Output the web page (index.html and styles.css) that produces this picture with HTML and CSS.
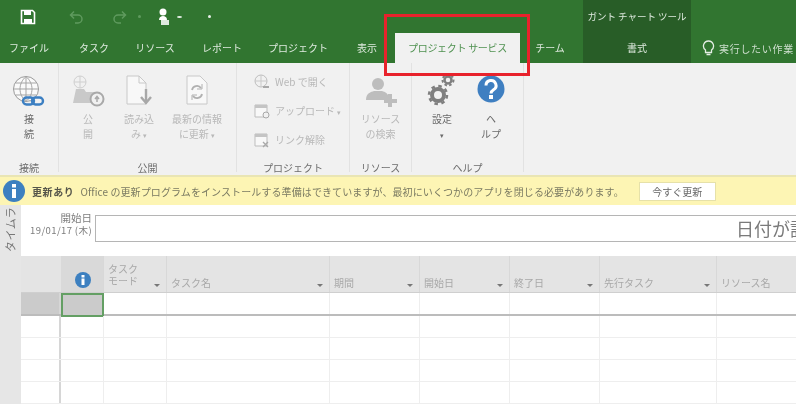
FILE: index.html
```html
<!DOCTYPE html>
<html lang="ja">
<head>
    <meta charset="UTF-8">
    <title>Project</title>
    <link rel="stylesheet" href="styles.css">
</head>
<body>
<div class="app">
    <!-- Title bar and tabs -->
    <div class="topbar">
        <div class="top-left">
            <div class="qat">
                <svg class="qa-save" width="16" height="16" viewBox="0 0 16 16"><path d="M1.500 1.500h11l2 2v11h-13z" fill="none" stroke="#fff" stroke-width="1.600"/><path d="M4 2h7v4H4zM4 10h8v4H4z" fill="#fff"/></svg>
                <svg class="qa-undo" width="16" height="14" viewBox="0 0 16 14"><path d="M3 5h7a4 4 0 0 1 0 8H7M6 1.500 2.500 5 6 8.500" fill="none" stroke="#5f9a5e" stroke-width="1.500"/></svg>
                <svg class="qa-redo" width="16" height="14" viewBox="0 0 16 14"><path d="M13 5H6a4 4 0 0 0 0 8h3M10 1.500 13.500 5 10 8.500" fill="none" stroke="#5f9a5e" stroke-width="1.500"/></svg>
                <span class="qa-dot dim"></span>
                <svg class="qa-user" width="12" height="18" viewBox="0 0 12 18"><circle cx="5" cy="4" r="3.500" fill="#fff"/><path d="M1 12c0-3 2-4 4-4s4 1 4 4z" fill="#fff"/><path d="M3 12h8v5H3z" fill="#dfe9df"/></svg>
                <span class="qa-dot drop"></span>
                <span class="qa-dot last"></span>
            </div>
            <div class="tabs">
                <span class="tab t-file">ファイル</span>
                <span class="tab t-task">タスク</span>
                <span class="tab t-res">リソース</span>
                <span class="tab t-rep">レポート</span>
                <span class="tab t-proj">プロジェクト</span>
                <span class="tab t-view">表示</span>
                <span class="tab tab-active">プロジェクト サービス</span>
                <span class="tab t-team">チーム</span>
            </div>
        </div>
        <div class="tool-tab">
            <div class="tool-title">ガント チャート ツール</div>
            <div class="tool-name">書式</div>
        </div>
        <div class="tell-me">
            <svg width="13" height="17" viewBox="0 0 13 17"><path d="M6.500 1a5 5 0 0 0-3 9v2.500h6V10a5 5 0 0 0-3-9zM4.500 14.500h4" fill="none" stroke="#e4eee4" stroke-width="1.300"/></svg>
            <span>実行したい作業</span>
        </div>
    </div>

    <!-- Ribbon -->
    <div class="ribbon">
        <div class="group g-connect">
            <div class="group-body">
                <div class="big-btn">
                    <svg width="36" height="36" viewBox="0 0 36 36"><circle cx="15" cy="14" r="12.500" fill="#fafafa" stroke="#9a9a9a"/><path d="M2.500 14h25M4.500 8h21M4.500 20h21M15 1.500v25M15 1.500c-8 7-8 18 0 25M15 1.500c8 7 8 18 0 25" fill="none" stroke="#a5a5a5"/><rect x="12" y="22.500" width="11" height="7" rx="3.500" fill="none" stroke="#3c7fc2" stroke-width="2.400"/><rect x="21" y="22.500" width="11" height="7" rx="3.500" fill="none" stroke="#3c7fc2" stroke-width="2.400"/></svg>
                    <span class="label active-label">接<br>続</span>
                </div>
            </div>
            <div class="group-name">接続</div>
        </div>
        <div class="group g-publish">
            <div class="group-body">
                <div class="big-btn b-pub">
                    <svg width="34" height="36" viewBox="0 0 34 36"><circle cx="9" cy="7" r="6" fill="none" stroke="#cfcfcf"/><path d="M3 7h12M9 1v12" stroke="#cfcfcf"/><path d="M2 28l3-14h8l2 3h12v11z" fill="#c9c9c9"/><circle cx="26" cy="24" r="6.500" fill="#f1f1f1" stroke="#a9a9a9" stroke-width="2"/><path d="M26 27v-5M24 24l2-2.500 2 2.500" fill="none" stroke="#a9a9a9" stroke-width="1.500"/></svg>
                    <span class="label">公<br>開</span>
                </div>
                <div class="big-btn b-read">
                    <svg width="28" height="36" viewBox="0 0 28 36"><path d="M2 1h12l7 7v21H2z" fill="#f8f8f8" stroke="#c8c8c8"/><path d="M14 1v7h7" fill="none" stroke="#c8c8c8"/><path d="M21 14v12M16 22l5 6 5-6" fill="none" stroke="#a8a8a8" stroke-width="2.400"/></svg>
                    <span class="label">読み込<br>み <small>▾</small></span>
                </div>
                <div class="big-btn b-refresh">
                    <svg width="24" height="36" viewBox="0 0 24 36"><path d="M2 1h13l7 7v21H2z" fill="#f8f8f8" stroke="#c8c8c8"/><path d="M7 15a5 5 0 0 1 9-2M17 19a5 5 0 0 1-9 2" fill="none" stroke="#b0b0b0" stroke-width="1.800"/><path d="M17 9v5h-5M7 25v-5h5" fill="none" stroke="#b0b0b0"/></svg>
                    <span class="label">最新の情報<br>に更新 <small>▾</small></span>
                </div>
            </div>
            <div class="group-name">公開</div>
        </div>
        <div class="group g-project">
            <div class="group-body small-list">
                <div class="small-btn">
                    <svg width="16" height="16" viewBox="0 0 16 16"><circle cx="7" cy="7" r="6" fill="none" stroke="#bdbdbd"/><path d="M1 7h12M7 1v12" stroke="#c9c9c9"/><path d="M9 13h6" stroke="#a8a8a8" stroke-width="2"/></svg>
                    <span>Web で開く</span>
                </div>
                <div class="small-btn">
                    <svg width="16" height="16" viewBox="0 0 16 16"><path d="M1 2h12v12H1z" fill="#f8f8f8" stroke="#bdbdbd"/><path d="M1 2h12v3H1z" fill="#c4c4c4"/><circle cx="12" cy="12" r="3" fill="#f1f1f1" stroke="#a8a8a8"/></svg>
                    <span>アップロード <small>▾</small></span>
                </div>
                <div class="small-btn">
                    <svg width="16" height="16" viewBox="0 0 16 16"><path d="M1 2h12v12H1z" fill="#f8f8f8" stroke="#bdbdbd"/><path d="M1 2h12v3H1z" fill="#c4c4c4"/><path d="M9 10l5 5M14 10l-5 5" stroke="#a8a8a8" stroke-width="1.300"/></svg>
                    <span>リンク解除</span>
                </div>
            </div>
            <div class="group-name">プロジェクト</div>
        </div>
        <div class="group g-resource">
            <div class="group-body">
                <div class="big-btn">
                    <svg width="36" height="36" viewBox="0 0 36 36"><circle cx="15" cy="9" r="6" fill="#bdbdbd"/><path d="M3 25c0-7 5-8 8-9h8c3 1 7 2 7 9z" fill="#bdbdbd"/><path d="M27 19v13M21 26h13" stroke="#bdbdbd" stroke-width="4"/></svg>
                    <span class="label">リソース<br>の検索</span>
                </div>
            </div>
            <div class="group-name">リソース</div>
        </div>
        <div class="group g-help">
            <div class="group-body">
                <div class="big-btn b-set">
                    <svg width="32" height="36" viewBox="0 0 32 36"><g fill="none" stroke="#7f7f7f"><circle cx="12" cy="20" r="6" stroke-width="4"/><circle cx="12" cy="20" r="9" stroke-width="2.500" stroke-dasharray="3.500 3.570"/><circle cx="22" cy="5" r="3.500" stroke-width="2.500"/><circle cx="22" cy="5" r="5.500" stroke-width="2" stroke-dasharray="2.500 2.260"/></g></svg>
                    <span class="label active-label">設定<br><small>▾</small></span>
                </div>
                <div class="big-btn b-help">
                    <svg width="30" height="36" viewBox="0 0 30 36"><circle cx="15" cy="14" r="13.500" fill="#3f7fc1"/><path d="M10 10.500a5 5 0 1 1 7.500 4.300c-1.600 1-2.500 1.700-2.500 3.700" fill="none" stroke="#fff" stroke-width="3"/><rect x="13" y="20" width="4" height="4" fill="#fff"/></svg>
                    <span class="label active-label">ヘ<br>ルプ</span>
                </div>
            </div>
            <div class="group-name">ヘルプ</div>
        </div>
    </div>

    <!-- Update message -->
    <div class="notice">
        <svg class="notice-icon" width="22" height="22" viewBox="0 0 22 22"><circle cx="11" cy="11" r="11" fill="#3d80c0"/><rect x="9" y="9" width="4" height="9" fill="#fff"/><rect x="9" y="4" width="4" height="3.500" fill="#fff"/></svg>
        <b>更新あり</b>
        <span class="notice-text">Office の更新プログラムをインストールする準備はできていますが、最初にいくつかのアプリを閉じる必要があります。</span>
        <span class="notice-btn">今すぐ更新</span>
    </div>

    <!-- Timeline -->
    <div class="timeline">
        <div class="side-tab"><span>タイムラ</span></div>
        <div class="start">
            <div>開始日</div>
            <div class="start-date">19/01/17 (木)</div>
        </div>
        <div class="time-box"><span>日付が設</span></div>
    </div>

    <!-- Task sheet -->
    <div class="sheet">
        <div class="sheet-side"></div>
        <div class="rows">
            <div class="row head">
                <div class="cell rowno"></div>
                <div class="cell c-info"><svg width="16" height="16" viewBox="0 0 16 16"><circle cx="8" cy="8" r="8" fill="#3d80c0"/><rect x="6.500" y="6.500" width="3" height="6.500" fill="#fff"/><rect x="6.500" y="3" width="3" height="2.500" fill="#fff"/></svg></div>
                <div class="cell c-mode"><span class="two">タスク<br>モード</span><i class="arrow"></i></div>
                <div class="cell c-name">タスク名<i class="arrow"></i></div>
                <div class="cell c-dur">期間<i class="arrow"></i></div>
                <div class="cell c-date">開始日<i class="arrow"></i></div>
                <div class="cell c-date">終了日<i class="arrow"></i></div>
                <div class="cell c-pre">先行タスク<i class="arrow"></i></div>
                <div class="cell c-last">リソース名</div>
            </div>
            <div class="row first">
                <div class="cell rowno sel"></div>
                <div class="cell c-info cur"></div>
                <div class="cell c-mode"></div><div class="cell c-name"></div><div class="cell c-dur"></div><div class="cell c-date"></div><div class="cell c-date"></div><div class="cell c-pre"></div><div class="cell c-last"></div>
            </div>
            <div class="row">
                <div class="cell rowno"></div><div class="cell c-info"></div>
                <div class="cell c-mode"></div><div class="cell c-name"></div><div class="cell c-dur"></div><div class="cell c-date"></div><div class="cell c-date"></div><div class="cell c-pre"></div><div class="cell c-last"></div>
            </div>
            <div class="row">
                <div class="cell rowno"></div><div class="cell c-info"></div>
                <div class="cell c-mode"></div><div class="cell c-name"></div><div class="cell c-dur"></div><div class="cell c-date"></div><div class="cell c-date"></div><div class="cell c-pre"></div><div class="cell c-last"></div>
            </div>
            <div class="row">
                <div class="cell rowno"></div><div class="cell c-info"></div>
                <div class="cell c-mode"></div><div class="cell c-name"></div><div class="cell c-dur"></div><div class="cell c-date"></div><div class="cell c-date"></div><div class="cell c-pre"></div><div class="cell c-last"></div>
            </div>
            <div class="row">
                <div class="cell rowno"></div><div class="cell c-info"></div>
                <div class="cell c-mode"></div><div class="cell c-name"></div><div class="cell c-dur"></div><div class="cell c-date"></div><div class="cell c-date"></div><div class="cell c-pre"></div><div class="cell c-last"></div>
            </div>
        </div>
    </div>

    <div class="callout"></div>
</div>
</body>
</html>
```

FILE: styles.css
```css
html, body {
    margin: 0;
    padding: 0;
    overflow: hidden;
    background: #fff;
}
.app {
    position: relative;
    width: 796px;
    height: 404px;
    overflow: hidden;
    font-family: "Noto Sans CJK JP", "Noto Sans", sans-serif;
    font-size: 10px;
    color: #6a6a6a;
    filter: blur(0.7px);
}
svg {
    display: block;
    flex: none;
}
small {
    font-size: 7px;
}

/* title bar */
.topbar {
    display: flex;
    height: 63px;
    background: #317530;
    color: #dfeadf;
}
.top-left {
    width: 583px;
    flex: none;
}
.qat {
    display: flex;
    align-items: center;
    height: 33px;
    padding-left: 20px;
}
.qa-undo { margin-left: 32px; }
.qa-redo { margin-left: 28px; }
.qa-dot {
    width: 3px;
    height: 3px;
    background: #e8f0e8;
    border-radius: 50%;
}
.qa-dot.dim { margin-left: 10px; background: #5f9a5e; }
.qa-user { margin-left: 17px; }
.qa-dot.drop { margin-left: 7px; width: 5px; height: 2px; }
.qa-dot.last { margin-left: 26px; }
.tabs {
    display: flex;
    height: 30px;
    align-items: flex-end;
}
.tab {
    height: 27px;
    line-height: 24px;
    text-align: center;
    flex: none;
}
.t-file { width: 58px; }
.t-task { width: 72px; }
.t-res { width: 50px; }
.t-rep { width: 84px; }
.t-proj { width: 68px; }
.t-view { width: 70px; }
.tab-active {
    width: 125px;
    height: 30px;
    line-height: 30px;
    margin-left: -7px;
    background: #f1f1f1;
    color: #4f9150;
    letter-spacing: -0.3px;
}
.t-team { width: 60px; }
.tool-tab {
    width: 108px;
    flex: none;
    background: #285d27;
    text-align: center;
}
.tool-title {
    height: 33px;
    line-height: 32px;
    font-size: 9.500px;
}
.tool-name {
    height: 30px;
    line-height: 30px;
}
.tell-me {
    display: flex;
    align-items: center;
    gap: 4px;
    padding: 33px 0 0 11px;
    height: 30px;
    white-space: nowrap;
    letter-spacing: 0.7px;
    color: #cfdfcf;
}

/* ribbon */
.ribbon {
    display: flex;
    height: 112px;
    background: #f1f1f1;
    color: #b8b8b8;
}
.group {
    display: flex;
    flex-direction: column;
    flex: none;
    height: 109px;
    border-right: 1px solid #e2e2e2;
    box-sizing: border-box;
}
.g-connect { width: 59px; }
.g-publish { width: 178px; }
.g-project { width: 113px; }
.g-resource { width: 62px; }
.g-help { width: 112px; }
.group-body {
    display: flex;
    flex: 1;
    min-height: 0;
}
.group-name {
    height: 16px;
    line-height: 23px;
    text-align: center;
    color: #6d6d6d;
}
.big-btn {
    display: flex;
    flex-direction: column;
    align-items: center;
    flex: none;
    width: 100%;
    padding-top: 12px;
    box-sizing: border-box;
}
.label {
    line-height: 15px;
    text-align: center;
    white-space: nowrap;
}
.active-label { color: #6a6a6a; }
.b-pub { width: 58px; }
.b-read { width: 42px; padding-left: 2px; }
.b-refresh { width: 76px; }
.small-list {
    flex-direction: column;
    padding: 8px 0 0 17px;
    gap: 8px;
}
.small-btn {
    display: flex;
    align-items: center;
    gap: 5px;
    height: 21px;
    white-space: nowrap;
}
.b-set { width: 60px; }
.b-help { width: 38px; }

/* notice */
.notice {
    display: flex;
    align-items: center;
    height: 30px;
    box-sizing: border-box;
    border-top: 2px solid #e9e5b4;
    padding-left: 3px;
    background: #fdf5b4;
    white-space: nowrap;
    color: #7a7a62;
}
.notice b {
    margin-left: 7px;
    color: #55554a;
    letter-spacing: 0.6px;
}
.notice-text {
    margin-left: 6px;
    letter-spacing: 0.1px;
}
.notice-btn {
    margin-left: 15px;
    width: 77px;
    height: 19px;
    line-height: 17px;
    box-sizing: border-box;
    text-align: center;
    background: #fff;
    border: 1px solid #e6e1a9;
    color: #666;
}

/* timeline */
.timeline {
    display: flex;
    height: 51px;
    background: #fff;
}
.side-tab {
    width: 21px;
    flex: none;
    background: #e6e6e6;
    overflow: hidden;
}
.side-tab span {
    display: block;
    height: 47px;
    writing-mode: vertical-rl;
    text-orientation: sideways;
    transform: rotate(180deg);
    line-height: 21px;
    font-size: 11px;
    letter-spacing: 0.5px;
    white-space: nowrap;
    color: #777;
}
.start {
    width: 71px;
    flex: none;
    text-align: right;
    line-height: 12px;
    padding-top: 7px;
    font-size: 10.500px;
    color: #7d7d7d;
}
.start-date {
    font-size: 9.500px;
    letter-spacing: 0.4px;
    white-space: nowrap;
}
.time-box {
    flex: 1;
    height: 27px;
    margin: 10px 0 0 3px;
    box-sizing: border-box;
    border: 1px solid #b5b5b5;
    border-right: 0;
    padding-left: 640px;
    overflow: hidden;
    font-size: 18px;
    line-height: 25px;
    white-space: nowrap;
    color: #7a7a7a;
}

/* sheet */
.sheet {
    display: flex;
    height: 148px;
    background: #fff;
}
.sheet-side {
    width: 21px;
    flex: none;
    background: #e6e6e6;
}
.rows {
    flex: 1;
    min-width: 0;
}
.row {
    display: flex;
    height: 22px;
    box-sizing: border-box;
    border-bottom: 1px solid #eeeeee;
}
.row.head {
    height: 37px;
    background: #e4e4e4;
    border-bottom: 1px solid #cfcfcf;
    color: #a8a8a8;
}
.row.first {
    height: 23px;
    border-bottom: 2px solid #bcbcbc;
}
.cell {
    position: relative;
    flex: none;
    box-sizing: border-box;
    border-right: 1px solid #eeeeee;
    white-space: nowrap;
}
.head .cell {
    padding: 19px 0 0 4px;
    line-height: 15px;
    border-right-color: #d8d8d8;
}
.rowno {
    width: 40px;
    border-right: 2px solid #d6d6d6;
}
.row.head .rowno { border-right-color: #e4e4e4; }
.rowno.sel { background: #cbcbcb; }
.c-info { width: 43px; }
.head .c-info {
    background: #d9d9d9;
    padding: 16px 0 0 14px;
}
.cur {
    background: #cbcbcb;
    border: 2px solid #649f64;
    margin-bottom: -2px;
    height: 24px;
}
.c-mode { width: 63px; }
.head .c-mode { padding-top: 7px; }
.two { display: block; line-height: 12px; }
.c-name { width: 163px; }
.c-dur { width: 90px; }
.c-date { width: 90px; }
.c-pre { width: 117px; }
.c-last { width: 79px; border-right: 0; }
.arrow {
    position: absolute;
    right: 6px;
    bottom: 5px;
    width: 0;
    height: 0;
    border: 3px solid transparent;
    border-top: 3px solid #777;
    border-bottom: 0;
}

/* red highlight drawn over the tab */
.callout {
    position: absolute;
    left: 384px;
    top: 14px;
    width: 146px;
    height: 62px;
    box-sizing: border-box;
    border: 3px solid #e8222c;
}
```
